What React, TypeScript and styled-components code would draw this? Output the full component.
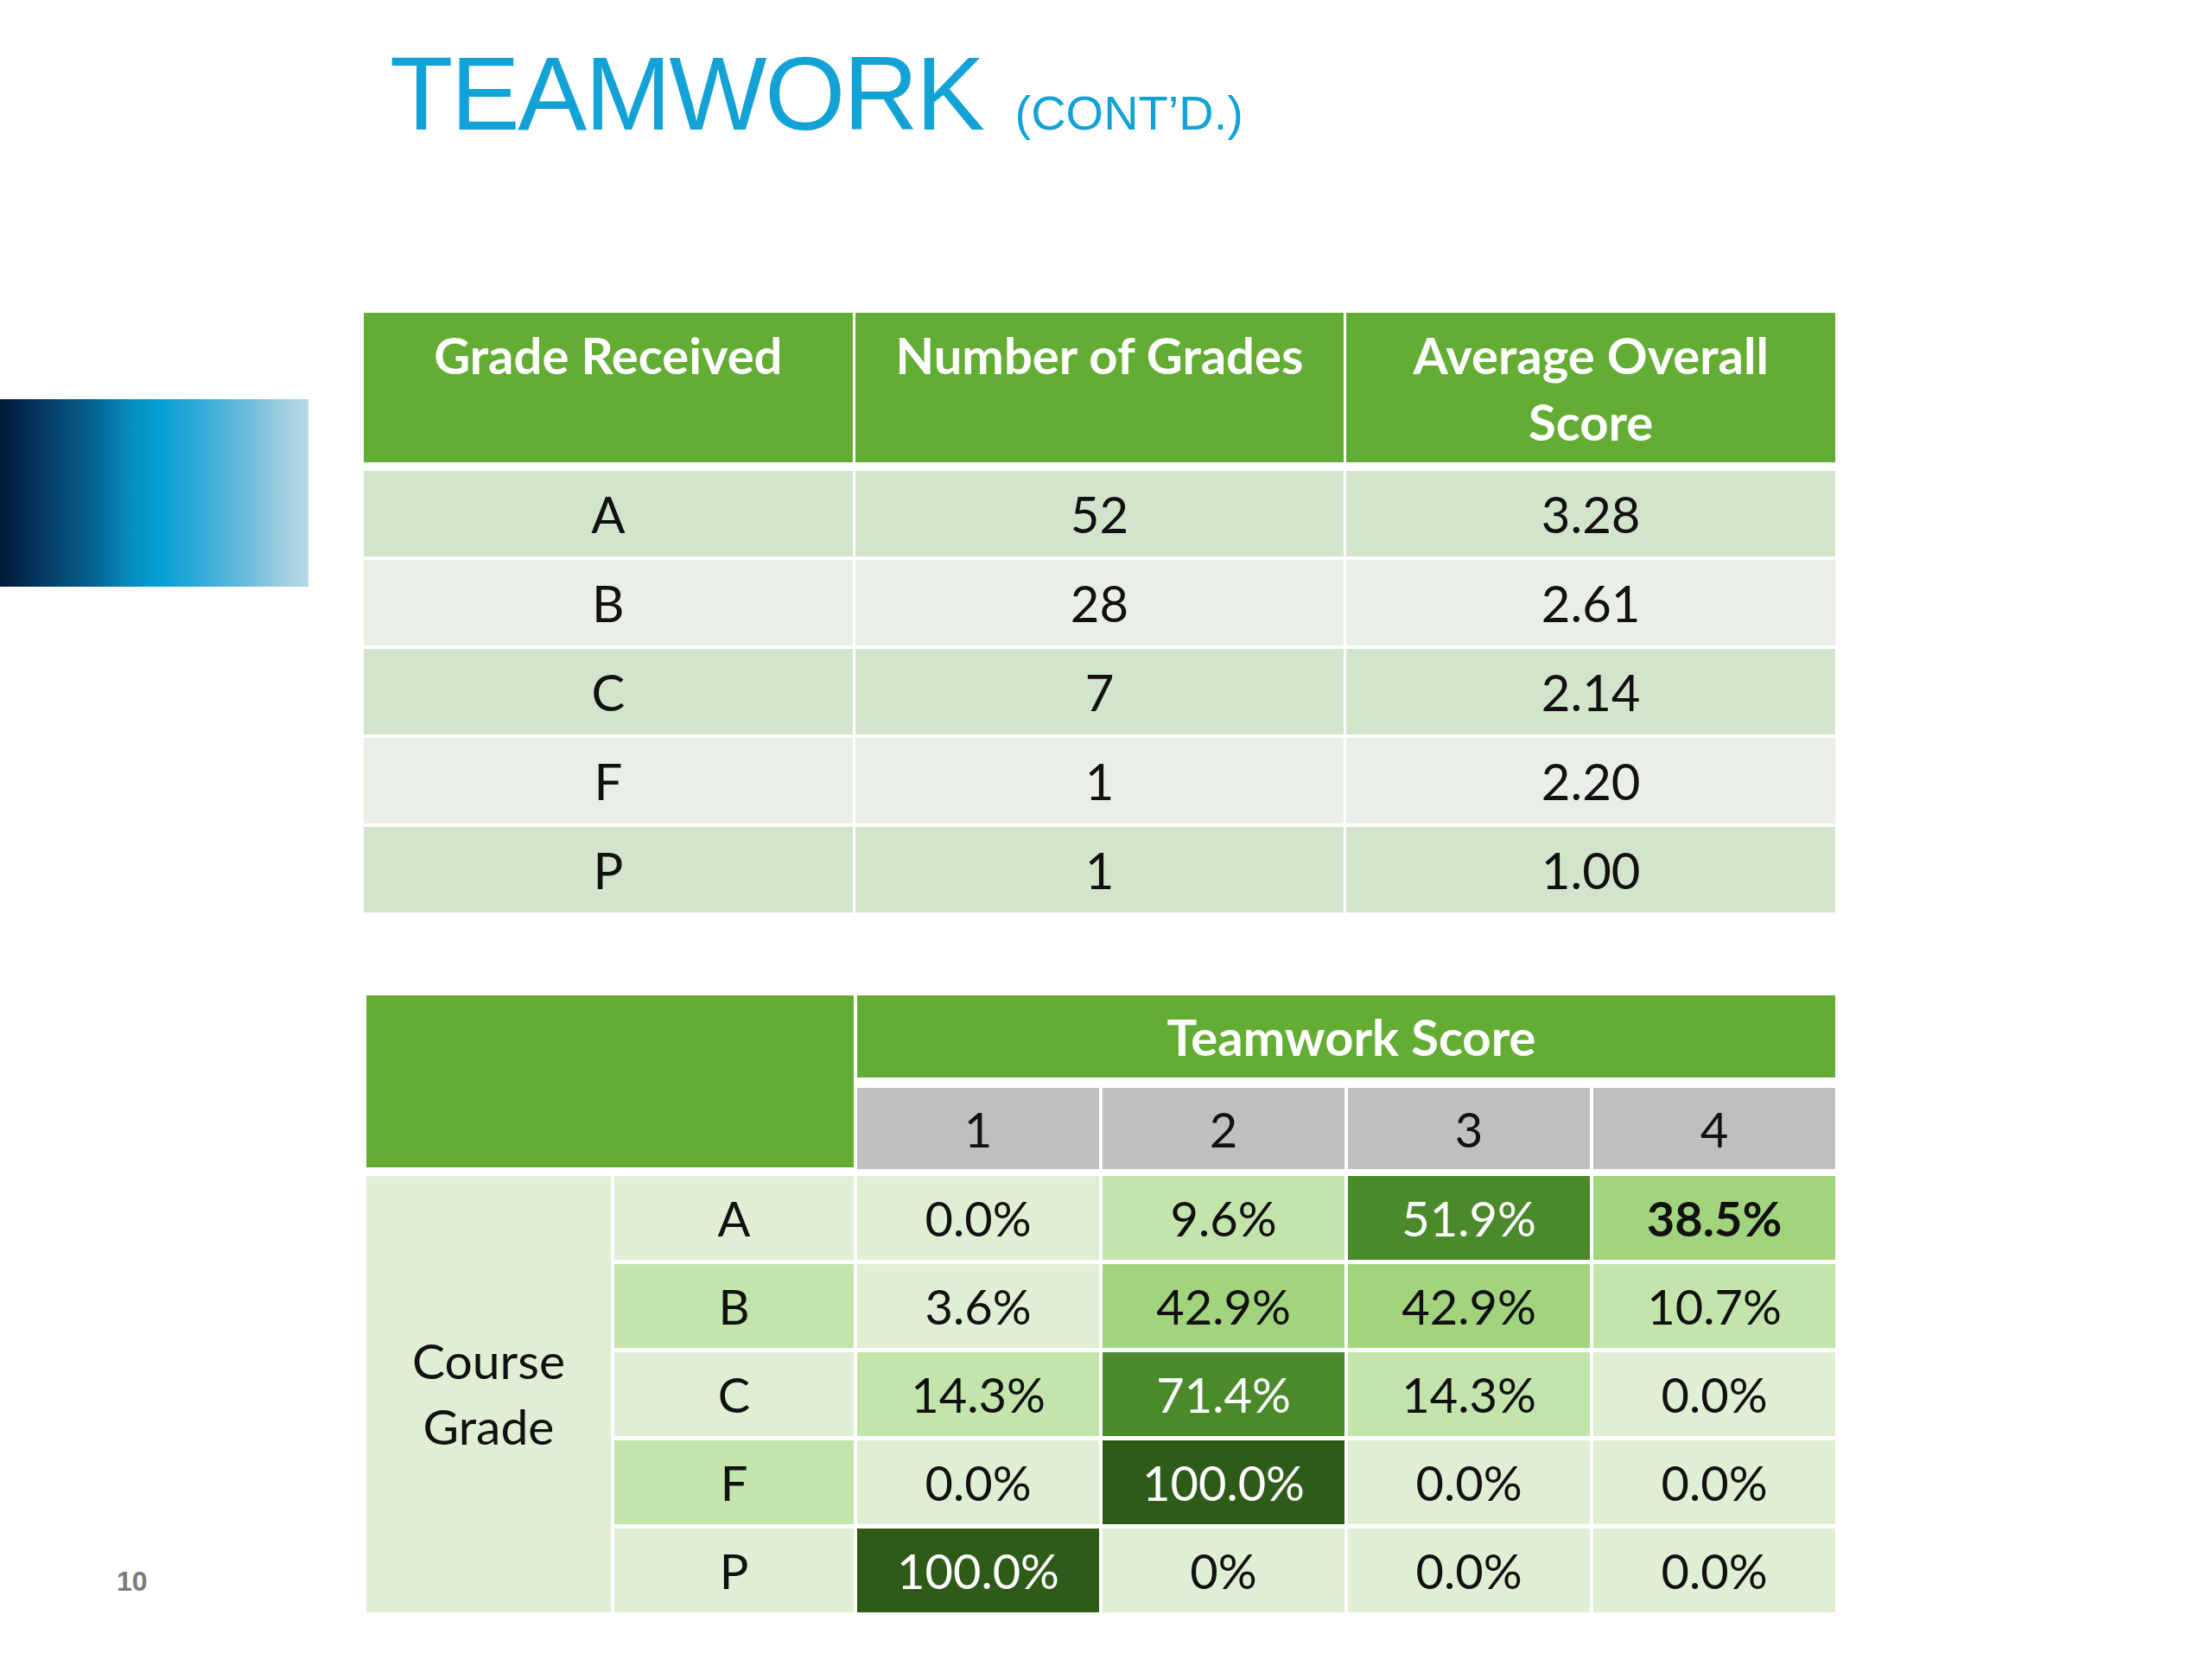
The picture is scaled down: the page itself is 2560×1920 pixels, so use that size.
import React from "react";
import styled, { createGlobalStyle } from "styled-components";

const Global = createGlobalStyle`
  html, body { margin: 0; padding: 0; background: #ffffff; }
  * { box-sizing: border-box; }
`;

const GREEN = "#64ad34";

const tones: Record<string, { bg: string; fg: string }> = {
  l0: { bg: "#e0efd4", fg: "#111111" },
  l1: { bg: "#c3e4aa", fg: "#111111" },
  l2: { bg: "#a1d47d", fg: "#111111" },
  d1: { bg: "#4a8a2b", fg: "#ffffff" },
  d2: { bg: "#2f5b19", fg: "#ffffff" },
};

const Page = styled.div`
  width: 2560px;
  height: 1920px;
  background: #ffffff;
  display: flex;
  flex-direction: column;
`;

const TitleBar = styled.h1`
  margin: 0;
  padding: 48px 0 0 451px;
  height: 172px;
  font-family: "Liberation Sans", Arial, sans-serif;
  font-weight: 400;
  font-size: 120px;
  line-height: 120px;
  letter-spacing: -2.5px;
  color: #12a2d6;
  white-space: nowrap;
`;

const TitleSmall = styled.span`
  margin-left: 6px;
  font-size: 56px;
  letter-spacing: 0;
`;

const Main = styled.div`
  margin-top: 190px;
  display: grid;
  grid-template-columns: 421px 1703px;
`;

const LeftRail = styled.div`
  display: flex;
  flex-direction: column;
`;

const GradientBar = styled.div`
  margin-top: 100px;
  width: 357px;
  height: 217px;
  background: linear-gradient(
    to right,
    #021838 0%,
    #043a62 14%,
    #05628f 30%,
    #0790c2 43%,
    #05a0d4 52%,
    #2eaad8 64%,
    #62bad9 78%,
    #9fd0e0 92%,
    #b6d9e4 100%
  );
`;

const PageNumber = styled.div`
  margin-top: auto;
  margin-bottom: 20px;
  padding-left: 135px;
  font-family: "Liberation Sans", Arial, sans-serif;
  font-weight: 700;
  font-size: 32px;
  line-height: 32px;
  color: #7a7a7a;
`;

const Tables = styled.div`
  display: flex;
  flex-direction: column;
  gap: 96px;
`;

/* ---------- Table 1 ---------- */

const GradeTable = styled.div`
  display: flex;
  flex-direction: column;
  gap: 10px;
  font-family: Lato, "Open Sans", sans-serif;
`;

const HeadRow = styled.div`
  display: grid;
  grid-template-columns: repeat(3, 1fr);
  column-gap: 3px;
  height: 173px;
`;

const HeadCell = styled.div`
  background: ${GREEN};
  color: #ffffff;
  font-weight: 700;
  font-size: 58px;
  line-height: 77px;
  text-align: center;
  padding: 10px 16px 0;
`;

const BodyRows = styled.div`
  display: flex;
  flex-direction: column;
  gap: 4px;
`;

const BodyRow = styled.div<{ $alt: boolean }>`
  display: grid;
  grid-template-columns: repeat(3, 1fr);
  column-gap: 3px;
  height: 99px;
  & > div {
    background: ${(p) => (p.$alt ? "#e9efe7" : "#d3e4cd")};
  }
`;

const BodyCell = styled.div`
  display: flex;
  align-items: center;
  justify-content: center;
  font-size: 58px;
  color: #111111;
`;

/* ---------- Table 2 ---------- */

const CrossTable = styled.div`
  margin-left: 3px;
  width: 1700px;
  display: grid;
  grid-template-columns: 283px 277px repeat(4, 1fr);
  grid-template-rows: 102px 97px repeat(5, 97px);
  column-gap: 4px;
  row-gap: 5px;
  font-family: Lato, "Open Sans", sans-serif;
  font-size: 56px;
`;

const Corner = styled.div`
  grid-column: 1 / 3;
  grid-row: 1 / 3;
  align-self: start;
  height: 199px;
  background: ${GREEN};
`;

const ScoreHeader = styled.div`
  grid-column: 3 / 7;
  grid-row: 1;
  align-self: start;
  height: 95px;
  background: ${GREEN};
  color: #ffffff;
  font-weight: 700;
  font-size: 58px;
  display: flex;
  align-items: center;
  justify-content: center;
  padding-left: 12px;
`;

const ScoreNum = styled.div`
  grid-row: 2;
  align-self: start;
  height: 94px;
  background: #bfbfbf;
  color: #111111;
  display: flex;
  align-items: center;
  justify-content: center;
`;

const CourseGrade = styled.div`
  grid-column: 1;
  grid-row: 3 / 8;
  background: ${tones.l0.bg};
  color: #111111;
  font-size: 57px;
  display: flex;
  align-items: center;
  justify-content: center;
  text-align: center;
  line-height: 76px;
  padding-bottom: 4px;
`;

const ToneCell = styled.div<{ $tone: string; $bold?: boolean }>`
  background: ${(p) => tones[p.$tone].bg};
  color: ${(p) => tones[p.$tone].fg};
  font-weight: ${(p) => (p.$bold ? 700 : 400)};
  display: flex;
  align-items: center;
  justify-content: center;
`;

const gradeRows = [
  ["A", "52", "3.28"],
  ["B", "28", "2.61"],
  ["C", "7", "2.14"],
  ["F", "1", "2.20"],
  ["P", "1", "1.00"],
];

type Cell = { v: string; t: string; b?: boolean };
const crossRows: { g: string; t: string; cells: Cell[] }[] = [
  {
    g: "A",
    t: "l0",
    cells: [
      { v: "0.0%", t: "l0" },
      { v: "9.6%", t: "l1" },
      { v: "51.9%", t: "d1" },
      { v: "38.5%", t: "l2", b: true },
    ],
  },
  {
    g: "B",
    t: "l1",
    cells: [
      { v: "3.6%", t: "l0" },
      { v: "42.9%", t: "l2" },
      { v: "42.9%", t: "l2" },
      { v: "10.7%", t: "l1" },
    ],
  },
  {
    g: "C",
    t: "l0",
    cells: [
      { v: "14.3%", t: "l1" },
      { v: "71.4%", t: "d1" },
      { v: "14.3%", t: "l1" },
      { v: "0.0%", t: "l0" },
    ],
  },
  {
    g: "F",
    t: "l1",
    cells: [
      { v: "0.0%", t: "l0" },
      { v: "100.0%", t: "d2" },
      { v: "0.0%", t: "l0" },
      { v: "0.0%", t: "l0" },
    ],
  },
  {
    g: "P",
    t: "l0",
    cells: [
      { v: "100.0%", t: "d2" },
      { v: "0%", t: "l0" },
      { v: "0.0%", t: "l0" },
      { v: "0.0%", t: "l0" },
    ],
  },
];

export default function App() {
  return (
    <Page>
      <Global />
      <TitleBar>
        TEAMWORK <TitleSmall>(CONT’D.)</TitleSmall>
      </TitleBar>
      <Main>
        <LeftRail>
          <GradientBar />
          <PageNumber>10</PageNumber>
        </LeftRail>
        <Tables>
          <GradeTable>
            <HeadRow>
              <HeadCell>Grade Received</HeadCell>
              <HeadCell>Number of Grades</HeadCell>
              <HeadCell>
                Average Overall
                <br />
                Score
              </HeadCell>
            </HeadRow>
            <BodyRows>
              {gradeRows.map((r, i) => (
                <BodyRow key={r[0]} $alt={i % 2 === 1}>
                  {r.map((c, j) => (
                    <BodyCell key={j}>{c}</BodyCell>
                  ))}
                </BodyRow>
              ))}
            </BodyRows>
          </GradeTable>

          <CrossTable>
            <Corner />
            <ScoreHeader>Teamwork Score</ScoreHeader>
            {["1", "2", "3", "4"].map((n) => (
              <ScoreNum key={n}>{n}</ScoreNum>
            ))}
            <CourseGrade>
              Course
              <br />
              Grade
            </CourseGrade>
            {crossRows.map((r) => (
              <React.Fragment key={r.g}>
                <ToneCell $tone={r.t}>{r.g}</ToneCell>
                {r.cells.map((c, k) => (
                  <ToneCell key={k} $tone={c.t} $bold={c.b}>
                    {c.v}
                  </ToneCell>
                ))}
              </React.Fragment>
            ))}
          </CrossTable>
        </Tables>
      </Main>
    </Page>
  );
}
